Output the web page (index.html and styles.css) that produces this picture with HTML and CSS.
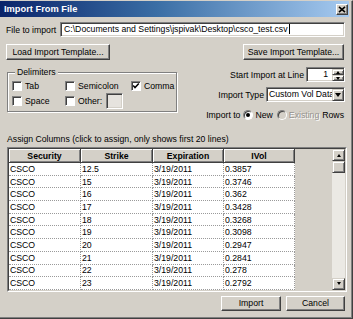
FILE: index.html
```html
<!DOCTYPE html>
<html>
<head>
<meta charset="utf-8">
<title>Import From File</title>
<link rel="stylesheet" href="styles.css">
</head>
<body>
<div class="win">
  <div class="titlebar">
    <span class="title">Import From File</span>
    <span class="close"><svg width="8" height="7" viewBox="0 0 8 7"><path d="M1 0.8 L7 6.2 M7 0.8 L1 6.2" stroke="#000" stroke-width="1.6" fill="none"/></svg></span>
  </div>
  <div class="content">
    <div class="file-row">
      <span class="lbl-file">File to import</span>
      <div class="field path">C:\Documents and Settings\jspivak\Desktop\csco_test.csv<span class="caret"></span></div>
    </div>
    <div class="btn-row">
      <div class="btn load">Load Import Template...</div>
      <div class="btn save">Save Import Template...</div>
    </div>
    <div class="mid">
      <fieldset class="group">
        <legend>Delimiters</legend>
        <div class="cb-grid">
          <div class="cb-item"><span class="cb"></span>Tab</div>
          <div class="cb-item"><span class="cb"></span>Semicolon</div>
          <div class="cb-item"><span class="cb"><svg width="8" height="8" viewBox="0 0 8 8"><path d="M1.2 3.6 L3 5.6 L6.8 1.6" stroke="#000" stroke-width="1.5" fill="none"/></svg></span>Comma</div>
          <div class="cb-item"><span class="cb"></span>Space</div>
          <div class="cb-item"><span class="cb"></span>Other:<span class="other-box"></span></div>
        </div>
      </fieldset>
      <div class="opts">
        <div class="opt-row">
          <span>Start Import at Line</span>
          <div class="field spin">
            <span class="spin-val">1</span>
            <span class="spin-btns"><span class="sb"><span class="tri-up"></span></span><span class="sb"><span class="tri-down-s"></span></span></span>
          </div>
        </div>
        <div class="opt-row">
          <span>Import Type</span>
          <div class="field combo">
            <span class="combo-val">Custom Vol Data</span>
            <span class="combo-btn"><span class="tri-down"></span></span>
          </div>
        </div>
        <div class="opt-row radios">
          <span class="r-lbl">Import to</span>
          <span class="radio on"></span><span class="r-txt">New</span>
          <span class="radio off"></span><span class="r-txt disabled">Existing</span>
          <span class="r-rows">Rows</span>
        </div>
      </div>
    </div>
    <div class="assign">Assign Columns (click to assign, only shows first 20 lines)</div>
    <div class="grid">
      <div class="grid-inner">
        <div class="tbl">
          <div class="th">Security</div><div class="th">Strike</div><div class="th">Expiration</div><div class="th">IVol</div>
          <div class="td">CSCO</div><div class="td">12.5</div><div class="td">3/19/2011</div><div class="td">0.3857</div>
          <div class="td">CSCO</div><div class="td">15</div><div class="td">3/19/2011</div><div class="td">0.3746</div>
          <div class="td">CSCO</div><div class="td">16</div><div class="td">3/19/2011</div><div class="td">0.362</div>
          <div class="td">CSCO</div><div class="td">17</div><div class="td">3/19/2011</div><div class="td">0.3428</div>
          <div class="td">CSCO</div><div class="td">18</div><div class="td">3/19/2011</div><div class="td">0.3268</div>
          <div class="td">CSCO</div><div class="td">19</div><div class="td">3/19/2011</div><div class="td">0.3098</div>
          <div class="td">CSCO</div><div class="td">20</div><div class="td">3/19/2011</div><div class="td">0.2947</div>
          <div class="td">CSCO</div><div class="td">21</div><div class="td">3/19/2011</div><div class="td">0.2841</div>
          <div class="td">CSCO</div><div class="td">22</div><div class="td">3/19/2011</div><div class="td">0.278</div>
          <div class="td">CSCO</div><div class="td">23</div><div class="td">3/19/2011</div><div class="td">0.2792</div>
        </div>
        <div class="spacer"></div>
        <div class="vscroll">
          <div class="raised sbtn"><span class="tri-up"></span></div>
          <div class="raised thumb"></div>
          <div class="track"></div>
          <div class="raised sbtn"><span class="tri-down-s"></span></div>
        </div>
      </div>
    </div>
    <div class="footer">
      <div class="btn import">Import</div>
      <div class="btn cancel">Cancel</div>
    </div>
  </div>
</div>
</body>
</html>
```

FILE: styles.css
```css
* { box-sizing: border-box; }
html, body { margin: 0; padding: 0; }
body {
  width: 353px;
  height: 319px;
  overflow: hidden;
  background: #d4d0c8;
  font-family: "Liberation Sans", Arial, sans-serif;
  font-size: 8.7px;
  color: #000;
}
.win {
  width: 353px;
  height: 319px;
  background: #d4d0c8;
  border-top: 1px solid #d4d0c8;
  border-right: 1px solid #404040;
  border-bottom: 1px solid #404040;
  box-shadow: inset -1px -1px 0 #808080;
  padding: 0 3px 2px 0;
  display: flex;
  flex-direction: column;
}
.titlebar {
  height: 16px;
  flex: none;
  display: flex;
  align-items: center;
  padding: 0 1px 0 4px;
  background: linear-gradient(to right, #0a246a 0%, #3a6ea5 45%, #a6caf0 100%);
}
.title {
  color: #fff;
  font-weight: bold;
  font-size: 9.3px;
}
.close {
  margin-left: auto;
  width: 12px;
  height: 11px;
  display: flex;
  align-items: center;
  justify-content: center;
  background: #d4d0c8;
  border: 1px solid;
  border-color: #fff #404040 #404040 #fff;
  box-shadow: inset -1px -1px 0 #808080;
}
.content {
  flex: 1;
  display: flex;
  flex-direction: column;
  padding: 0 4px 0 6px;
}
.field {
  background: #fff;
  border: 1px solid;
  border-color: #808080 #fff #fff #808080;
  box-shadow: inset 1px 1px 0 #404040, inset -1px -1px 0 #d4d0c8;
}
.file-row {
  margin-top: 5px;
  height: 15px;
  display: flex;
  align-items: center;
}
.lbl-file { width: 54px; flex: none; }
.path {
  flex: 1;
  height: 15px;
  line-height: 13px;
  padding-left: 3px;
  white-space: nowrap;
  overflow: hidden;
}
.caret {
  display: inline-block;
  width: 1px;
  height: 10px;
  background: #000;
  vertical-align: -2px;
  margin-left: 1px;
}
.btn {
  height: 16px;
  display: flex;
  align-items: center;
  justify-content: center;
  background: #d4d0c8;
  border: 1px solid;
  border-color: #fff #404040 #404040 #fff;
  box-shadow: inset -1px -1px 0 #808080;
  white-space: nowrap;
}
.btn-row {
  margin-top: 7px;
  display: flex;
  justify-content: space-between;
}
.load { width: 104px; }
.save { width: 101px; margin-right: 1px; }
.mid {
  margin-top: 7px;
  height: 54px;
  display: flex;
  justify-content: space-between;
  align-items: flex-start;
}
.group {
  margin: 0 0 0 1px;
  width: 170px;
  padding: 2px 1px 2px 4px;
  border: 1px solid #808080;
  box-shadow: inset 1px 1px 0 #fff, 1px 1px 0 #fff;
  min-width: 0;
}
.group legend {
  padding: 0 2px;
  margin-left: 3px;
  line-height: 10px;
  background: #d4d0c8;
}
.cb-grid {
  display: grid;
  grid-template-columns: 53px 66px auto;
  grid-template-rows: 13px 16px;
  row-gap: 1px;
  align-items: center;
}
.cb-item {
  display: flex;
  align-items: center;
  gap: 3px;
  white-space: nowrap;
}
.cb {
  width: 10px;
  height: 10px;
  flex: none;
  background: #fff;
  border: 1px solid;
  border-color: #808080 #fff #fff #808080;
  box-shadow: inset 1px 1px 0 #404040;
  display: flex;
  align-items: center;
  justify-content: center;
}
.other-box {
  width: 17px;
  height: 16px;
  flex: none;
  margin-left: 1px;
  background: #e6e3de;
  border: 1px solid;
  border-color: #808080 #fff #fff #808080;
  box-shadow: inset 1px 1px 0 #404040, inset -1px -1px 0 #d4d0c8;
}
.opts {
  display: flex;
  flex-direction: column;
  align-items: flex-end;
  gap: 5px;
}
.opt-row {
  display: flex;
  align-items: center;
  gap: 2px;
  height: 15px;
  white-space: nowrap;
}
.spin {
  width: 39px;
  height: 15px;
  display: flex;
}
.spin-val {
  flex: 1;
  text-align: right;
  padding-right: 4px;
  line-height: 13px;
}
.spin-btns {
  width: 12px;
  display: flex;
  flex-direction: column;
  padding: 1px 0 0 0;
}
.sb, .raised {
  background: #d4d0c8;
  border: 1px solid;
  border-color: #d4d0c8 #404040 #404040 #d4d0c8;
  box-shadow: inset 1px 1px 0 #fff, inset -1px -1px 0 #808080;
  display: flex;
  align-items: center;
  justify-content: center;
}
.sb { flex: 1; }
.tri-up {
  width: 0; height: 0;
  border-left: 2.5px solid transparent;
  border-right: 2.5px solid transparent;
  border-bottom: 3px solid #000;
}
.tri-down-s {
  width: 0; height: 0;
  border-left: 2.5px solid transparent;
  border-right: 2.5px solid transparent;
  border-top: 3px solid #000;
}
.tri-down {
  width: 0; height: 0;
  border-left: 3.5px solid transparent;
  border-right: 3.5px solid transparent;
  border-top: 4px solid #000;
}
.combo {
  width: 79px;
  height: 15px;
  display: flex;
}
.combo-val {
  flex: 1;
  padding-left: 2px;
  line-height: 13px;
  overflow: hidden;
  white-space: nowrap;
}
.combo-btn {
  width: 12px;
  flex: none;
  margin: 1px 0 0 0;
  background: #d4d0c8;
  border: 1px solid;
  border-color: #d4d0c8 #404040 #404040 #d4d0c8;
  box-shadow: inset 1px 1px 0 #fff, inset -1px -1px 0 #808080;
  display: flex;
  align-items: center;
  justify-content: center;
}
.radios {
  margin-top: 2px;
  height: 12px;
  gap: 0;
  margin-right: 1px;
}
.radio {
  width: 10px;
  height: 10px;
  border-radius: 50%;
  border: 1px solid;
  border-color: #808080 #fff #fff #808080;
  box-shadow: inset 1px 1px 0 #404040;
  display: flex;
  align-items: center;
  justify-content: center;
  margin: 0 2px 0 3px;
}
.radio.on { background: #fff; }
.radio.on::after {
  content: "";
  width: 4px;
  height: 4px;
  border-radius: 50%;
  background: #000;
}
.radio.off { background: #d4d0c8; margin-left: 4px; }
.disabled { color: #96938e; text-shadow: 1px 1px 0 #fff; }
.r-rows { margin-left: 3px; }
.assign {
  margin-top: 13px;
  line-height: 11px;
  margin-left: 1px;
  white-space: nowrap;
}
.grid {
  margin: 2px -2px 0 1px;
  border: 1px solid;
  border-color: #808080 #fff #fff #808080;
}
.grid-inner {
  border: 1px solid;
  border-color: #404040 #d4d0c8 #d4d0c8 #404040;
  display: flex;
}
.tbl {
  width: 286px;
  flex: none;
  display: grid;
  grid-template-columns: 72px 72px 71px 71px;
  grid-template-rows: 14px repeat(10, 12.7px);
}
.th {
  background: #d4d0c8;
  font-weight: bold;
  display: flex;
  align-items: center;
  justify-content: center;
  border-right: 1px solid #404040;
  border-bottom: 1px solid #404040;
  box-shadow: inset 1px 1px 0 #fff, inset -1px -1px 0 #808080;
}
.td {
  background: #fff;
  display: flex;
  align-items: center;
  padding-left: 1px;
  border-right: 1px dotted #9a9a9a;
  border-bottom: 1px dotted #9a9a9a;
  white-space: nowrap;
  overflow: hidden;
}
.spacer { flex: 1; background: #d4d0c8; }
.vscroll {
  width: 13px;
  flex: none;
  display: flex;
  flex-direction: column;
  background: #ebe9e4;
}
.sbtn { height: 12px; flex: none; }
.thumb { height: 12px; flex: none; }
.track { flex: 1; }
.footer {
  margin-top: 4px;
  display: flex;
  justify-content: flex-end;
  gap: 5px;
}
.footer .btn { height: 15px; }
.import { width: 60px; }
.cancel { width: 59px; }
```
